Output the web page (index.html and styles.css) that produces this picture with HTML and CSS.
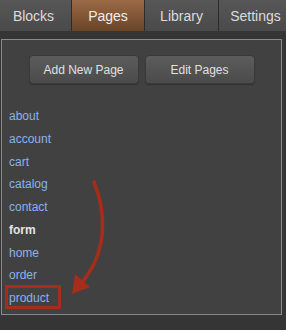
FILE: index.html
```html
<!DOCTYPE html>
<html>
<head>
<meta charset="utf-8">
<link rel="stylesheet" href="styles.css">
</head>
<body>
<div class="tabs">
  <div class="tab tab-blocks">Blocks</div>
  <div class="tab tab-active">Pages</div>
  <div class="tab tab-library">Library</div>
  <div class="tab tab-settings">Settings</div>
</div>
<div class="panel">
  <div class="actions">
    <button class="btn">Add New Page</button>
    <button class="btn">Edit Pages</button>
  </div>
  <ul class="pages">
    <li><a>about</a></li>
    <li><a>account</a></li>
    <li><a>cart</a></li>
    <li><a>catalog</a></li>
    <li><a>contact</a></li>
    <li class="current">form</li>
    <li><a>home</a></li>
    <li><a>order</a></li>
    <li><a>product</a></li>
  </ul>
  <div class="highlight"></div>
  <svg class="arrow" width="286" height="330" viewBox="0 0 286 330">
    <path d="M94,182 C106,212 108,250 83,281" fill="none" stroke="#a42d1c" stroke-width="3.6" stroke-linecap="round"/>
    <polygon points="72,294 75,274 90,287" fill="#a42d1c"/>
  </svg>
</div>
</body>
</html>
```
FILE: styles.css
```css
html, body {
  margin: 0;
  padding: 0;
}
body {
  width: 286px;
  height: 330px;
  overflow: hidden;
  background: #353535;
  font-family: "Liberation Sans", Arial, sans-serif;
  position: relative;
}
.tabs {
  display: flex;
  height: 31px;
  width: 300px;
}
.tab {
  box-sizing: border-box;
  height: 31px;
  display: flex;
  align-items: center;
  justify-content: center;
  font-size: 14px;
  color: #dcdcdc;
  background: linear-gradient(#575757, #4a4a4a);
  border-right: 1px solid #2c2c2c;
}
.tab-blocks {
  width: 72px;
  padding-right: 4px;
}
.tab-active {
  width: 73px;
  background: linear-gradient(#9b6a48, #6a4427);
  color: #eee;
}
.tab-library {
  width: 74px;
}
.tab-settings {
  width: 73px;
  border-right: none;
}
.panel {
  box-sizing: border-box;
  margin: 8px 0 0 1px;
  width: 281px;
  height: 276px;
  border: 1px solid #8a8a8a;
  background: #414141;
}
.actions {
  display: flex;
  justify-content: center;
  gap: 6px;
  padding-top: 15px;
}
.btn {
  box-sizing: border-box;
  width: 110px;
  height: 29px;
  border: 1px solid #3a3a3a;
  border-radius: 4px;
  background: linear-gradient(#5c5c5c, #4b4b4b);
  color: #e0e0e0;
  font-family: "Liberation Sans", Arial, sans-serif;
  font-size: 12px;
  padding: 0;
  box-shadow: 0 1px 1px rgba(0,0,0,0.25);
}
.pages {
  list-style: none;
  margin: 21px 0 0 0;
  padding: 0 0 0 7px;
}
.pages li {
  font-size: 12px;
  line-height: 22.75px;
  height: 22.75px;
}
.pages a {
  color: #8ab2ee;
}
.pages .current {
  color: #e6e6e6;
  font-weight: bold;
}
.highlight {
  position: absolute;
  left: 5px;
  top: 285px;
  width: 56px;
  height: 24px;
  box-sizing: border-box;
  border: 3px solid #a42d1c;
}
.arrow {
  position: absolute;
  left: 0;
  top: 0;
}
```
